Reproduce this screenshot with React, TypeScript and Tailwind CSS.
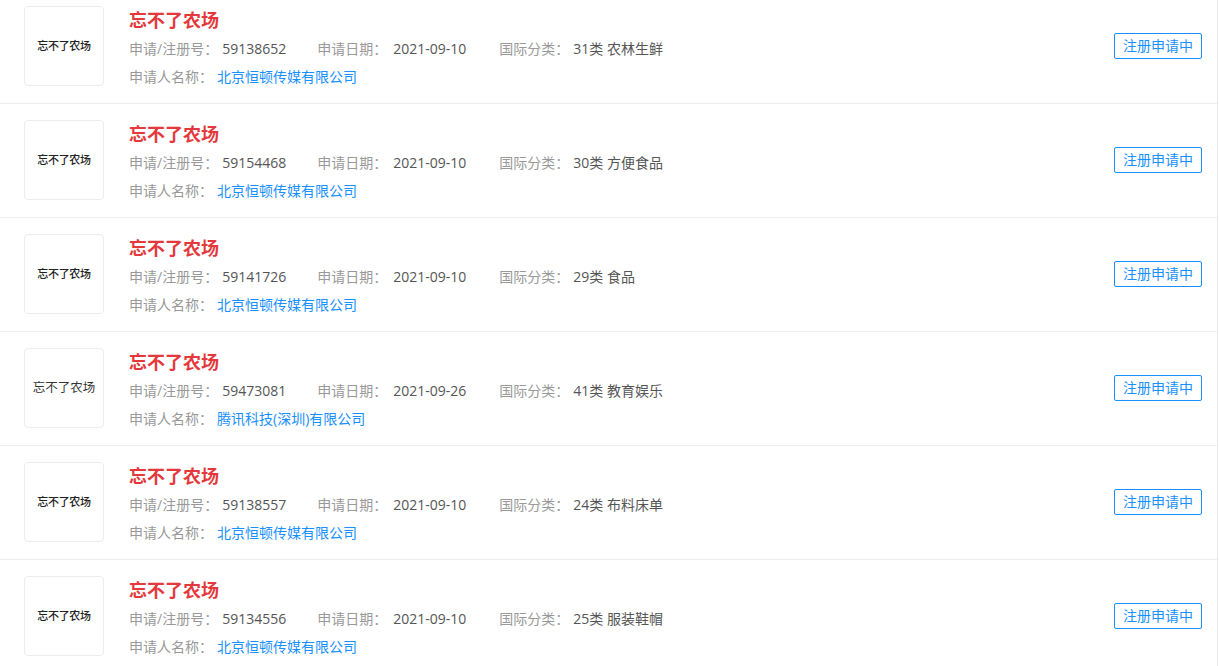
import React from "react";

type Mark = {
  regNo: string;
  date: string;
  cls: string;
  applicant: string;
  serif?: boolean;
};

const marks: Mark[] = [
  { regNo: "59138652", date: "2021-09-10", cls: "31类 农林生鲜", applicant: "北京恒顿传媒有限公司" },
  { regNo: "59154468", date: "2021-09-10", cls: "30类 方便食品", applicant: "北京恒顿传媒有限公司" },
  { regNo: "59141726", date: "2021-09-10", cls: "29类 食品", applicant: "北京恒顿传媒有限公司" },
  { regNo: "59473081", date: "2021-09-26", cls: "41类 教育娱乐", applicant: "腾讯科技(深圳)有限公司", serif: true },
  { regNo: "59138557", date: "2021-09-10", cls: "24类 布料床单", applicant: "北京恒顿传媒有限公司" },
  { regNo: "59134556", date: "2021-09-10", cls: "25类 服装鞋帽", applicant: "北京恒顿传媒有限公司" },
];

const font = { fontFamily: '"Open Sans", "Noto Sans CJK SC", sans-serif' };

function Row({ m }: { m: Mark }) {
  return (
    <div className="flex h-[114px] items-start border-b border-[#eeeeee] pl-6 pr-[15px] pt-4">
      <div className="flex h-20 w-20 shrink-0 items-center justify-center rounded border border-[#ececec] bg-white">
        {m.serif ? (
          <span className="text-[12.5px] text-[#333]">忘不了农场</span>
        ) : (
          <span className="text-[11px] font-medium tracking-tight text-[#222]">忘不了农场</span>
        )}
      </div>

      <div className="ml-[25px] flex h-20 flex-1 flex-col">
        <div className="text-[18px] font-bold leading-[28px] text-[#e4393c]">忘不了农场</div>
        <div className="mt-px flex text-[14px] leading-[28px]">
          <span className="mr-[31px]">
            <span className="text-[#999]">申请/注册号：</span>
            <span className="ml-1 text-[#555]">{m.regNo}</span>
          </span>
          <span className="mr-[33px]">
            <span className="text-[#999]">申请日期：</span>
            <span className="ml-[6px] text-[#555]">{m.date}</span>
          </span>
          <span>
            <span className="text-[#999]">国际分类：</span>
            <span className="ml-1 text-[#555]">{m.cls}</span>
          </span>
        </div>
        <div className="flex text-[14px] leading-[28px]">
          <span className="text-[#999]">申请人名称：</span>
          <span className="ml-1 text-[#1890ff]">{m.applicant}</span>
        </div>
      </div>

      <div className="flex h-20 items-center">
        <button
          type="button"
          className="h-[26px] rounded-[2px] border border-[#1890ff] bg-white px-2 text-[14px] leading-[24px] text-[#1890ff]"
        >
          注册申请中
        </button>
      </div>
    </div>
  );
}

export default function App() {
  return (
    <div className="h-[666px] w-full overflow-hidden bg-white" style={font}>
      <div className="-mt-[10px] w-[1218px] border-r border-[#e8e8e8]">
        {marks.map((m) => (
          <Row key={m.regNo} m={m} />
        ))}
      </div>
    </div>
  );
}
